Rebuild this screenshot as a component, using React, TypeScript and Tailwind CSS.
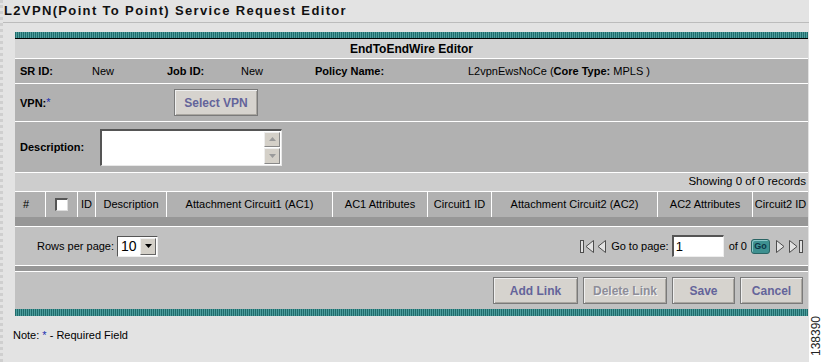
import React from 'react';

const font = "font-['Liberation_Sans',Arial,sans-serif]";

const Teal: React.FC<{ h: string }> = ({ h }) => (
  <div
    className={`${h} bg-[repeating-linear-gradient(90deg,#1f6c6c_0px,#1f6c6c_1px,#4f9d9d_1px,#4f9d9d_2px)]`}
  />
);

const GrayButton: React.FC<{ label: string; w: string; disabled?: boolean }> = ({ label, w, disabled }) => (
  <button
    type="button"
    className={`${w} h-[27px] bg-[#d6d3ce] border border-[#7a7a7a] shadow-[inset_1px_1px_0_#efefef,inset_-1px_-1px_0_#a9a6a0] text-[12px] font-bold ${
      disabled ? 'text-[#8d8d98] [text-shadow:1px_1px_0_#f4f4f4]' : 'text-[#64649a]'
    }`}
  >
    {label}
  </button>
);

const Arrow: React.FC<{ dir: 'left' | 'right'; bar?: boolean }> = ({ dir, bar }) => {
  const w = bar ? 14 : 9;
  return (
    <svg width={w} height="15" viewBox={`0 0 ${w} 15`} className="block">
      <g fill="#e2e2e2" stroke="#4d4d4d" strokeWidth="1">
        {dir === 'left' ? (
          <>
            {bar && <rect x="0.5" y="1.5" width="3" height="12" />}
            <path d={bar ? 'M13.5 1.5 L6 7.5 L13.5 13.5 Z' : 'M8.5 1.5 L1 7.5 L8.5 13.5 Z'} />
          </>
        ) : (
          <>
            <path d="M0.5 1.5 L8 7.5 L0.5 13.5 Z" />
            {bar && <rect x="10.5" y="1.5" width="3" height="12" />}
          </>
        )}
      </g>
    </svg>
  );
};

const columns: { label: string; w: string; cls?: string }[] = [
  { label: '#', w: 'w-[31px]', cls: 'justify-start pl-[8px]' },
  { label: '', w: 'w-[32px]' },
  { label: 'ID', w: 'w-[18px]' },
  { label: 'Description', w: 'w-[71px]' },
  { label: 'Attachment Circuit1 (AC1)', w: 'w-[166px]' },
  { label: 'AC1 Attributes', w: 'w-[95px]' },
  { label: 'Circuit1 ID', w: 'w-[64px]' },
  { label: 'Attachment Circuit2 (AC2)', w: 'w-[166px]' },
  { label: 'AC2 Attributes', w: 'w-[95px]' },
  { label: 'Circuit2 ID', w: 'flex-1' },
];

export default function App() {
  return (
    <div className={`flex w-[823px] h-[362px] overflow-hidden text-[11px] text-black ${font}`}>
      <div className="w-[809px] bg-[#e3e3e3] flex flex-col border-l-[3px] border-dotted border-[#cfcfcf]">
        {/* title */}
        <div className="h-[22px] pl-[1px] flex items-center text-[13px] font-bold tracking-[1.35px] text-[#111]">
          L2VPN(Point To Point) Service Request Editor
        </div>
        <div className="h-px bg-[#bcbcbc]" />
        <div className="h-[9px]" />

        <div className="ml-[12px] w-[793px] flex flex-col">
          <Teal h="h-[6px]" />
          <div className="h-px bg-black" />

          <div className="h-[20px] bg-[#d3d3d3] border-b border-white flex items-center justify-center text-[12px] font-bold">
            EndToEndWire Editor
          </div>

          <div className="h-[25px] bg-[#b1b1b1] border-b border-white grid grid-cols-[77px_75px_74px_74px_153px_1fr] items-center">
            <span className="pl-[5px] font-bold">SR ID:</span>
            <span>New</span>
            <span className="font-bold">Job ID:</span>
            <span>New</span>
            <span className="font-bold">Policy Name:</span>
            <span>
              L2vpnEwsNoCe (<b>Core Type:</b> MPLS )
            </span>
          </div>

          <div className="h-[38px] bg-[#b1b1b1] border-b border-white flex items-center">
            <span className="w-[159px] pl-[5px] pt-[2px] font-bold">
              VPN:<sup className="text-[#1a2fb0] font-normal text-[11px] relative -top-[1px]">*</sup>
            </span>
            <GrayButton label="Select VPN" w="w-[84px]" />
          </div>

          <div className="h-[51px] bg-[#b1b1b1] border-b border-white flex items-center">
            <span className="w-[85px] pl-[5px] font-bold">Description:</span>
            <div className="w-[182px] h-[37px] bg-white border-t-2 border-l-2 border-[#555] border-r border-b border-r-[#e8e8e8] border-b-[#e8e8e8] flex justify-end">
              <div className="w-[17px] flex flex-col gap-px py-px pr-px">
                <div className="flex-1 bg-[#d4d0c8] border border-[#eee] border-r-[#888] border-b-[#888] flex items-center justify-center">
                  <svg width="7" height="4" viewBox="0 0 7 4"><path d="M3.5 0 L7 4 L0 4 Z" fill="#9a9a9a" /></svg>
                </div>
                <div className="flex-1 bg-[#d4d0c8] border border-[#eee] border-r-[#888] border-b-[#888] flex items-center justify-center">
                  <svg width="7" height="4" viewBox="0 0 7 4"><path d="M0 0 L7 0 L3.5 4 Z" fill="#9a9a9a" /></svg>
                </div>
              </div>
            </div>
          </div>

          <div className="h-[19px] bg-[#cdcdcd] border-b border-white flex items-center justify-end pr-[2px] text-[11.5px]">
            Showing 0 of 0 records
          </div>

          <div className="h-[25px] bg-[#b1b1b1] flex">
            {columns.map((c, i) => (
              <div
                key={i}
                className={`${c.w} ${c.cls ?? 'justify-center'} flex items-center whitespace-nowrap ${
                  i < columns.length - 1 ? 'border-r border-white' : ''
                }`}
              >
                {i === 1 ? (
                  <span className="w-[13px] h-[13px] bg-white border-t-2 border-l-2 border-[#555] border-r border-b border-r-[#ddd] border-b-[#ddd]" />
                ) : (
                  c.label
                )}
              </div>
            ))}
          </div>
          <div className="h-[10px] bg-[#979797] border-b border-white" />

          <div className="h-[39px] bg-[#c1c1c1] border-b border-white flex items-center justify-between pl-[22px] pr-[5px]">
            <div className="flex items-center gap-[3px]">
              <span>Rows per page:</span>
              <div className="w-[41px] h-[21px] bg-white border-t border-l border-[#555] border-r border-b border-r-[#eee] border-b-[#eee] flex items-center">
                <span className="flex-1 pl-[3px] text-[14px] leading-none">10</span>
                <div className="w-[16px] h-[17px] mr-px bg-[#d4d0c8] border border-[#eee] border-r-[#666] border-b-[#666] flex items-center justify-center">
                  <svg width="7" height="4" viewBox="0 0 7 4"><path d="M0 0 L7 0 L3.5 4 Z" fill="#000" /></svg>
                </div>
              </div>
            </div>
            <div className="flex items-center">
              <Arrow dir="left" bar />
              <span className="w-[3px]" />
              <Arrow dir="left" />
              <span className="ml-[5px]">Go to page:</span>
              <div className="ml-[3px] w-[52px] h-[22px] bg-white border-t-2 border-l-2 border-[#555] border-r border-b border-r-[#eee] border-b-[#eee] flex items-center pl-[2px] text-[13px]">
                1
              </div>
              <span className="ml-[5px]">of 0</span>
              <span className="ml-[4px] w-[19px] h-[15px] rounded-[3px] bg-[#3e9090] border border-[#2a6464] shadow-[inset_1px_1px_0_#8cc8c8] flex items-center justify-center text-[9px] leading-none font-bold text-[#0b3445]">
                Go
              </span>
              <span className="w-[6px]" />
              <Arrow dir="right" />
              <span className="w-[4px]" />
              <Arrow dir="right" bar />
            </div>
          </div>
          <div className="h-[6px] bg-[#979797] border-b border-white" />

          <div className="h-[37px] bg-[#c1c1c1] flex items-center justify-end gap-[5px] pr-[5px]">
            <GrayButton label="Add Link" w="w-[85px]" />
            <GrayButton label="Delete Link" w="w-[84px]" disabled />
            <GrayButton label="Save" w="w-[63px]" />
            <GrayButton label="Cancel" w="w-[63px]" />
          </div>
          <Teal h="h-[7px]" />
        </div>

        <div className="pl-[10px] pt-[11px] text-[11px]">
          Note: <span className="text-[#1a2fb0]">*</span> - Required Field
        </div>
      </div>
      <div className="flex-1 bg-white flex flex-col justify-end items-center pb-[6px]">
        <span className="[writing-mode:vertical-rl] rotate-180 text-[12px] leading-none text-[#222]">138390</span>
      </div>
    </div>
  );
}
